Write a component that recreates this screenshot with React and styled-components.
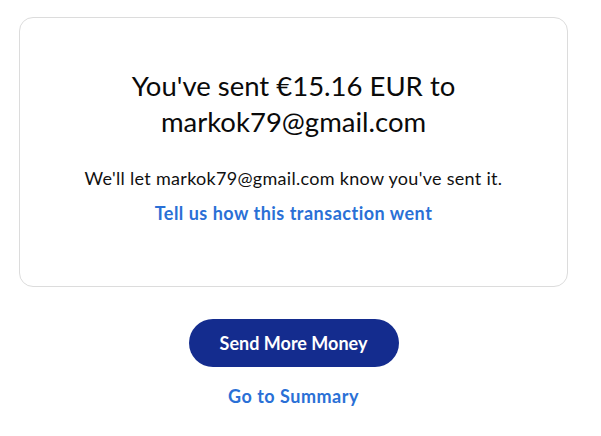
import styled, { createGlobalStyle } from 'styled-components';

const GlobalStyle = createGlobalStyle`
  body {
    margin: 0;
    background: #ffffff;
    font-family: 'Lato', 'Noto Sans', sans-serif;
    color: #001435;
  }
`;

const Page = styled.div`
  padding: 17px 33px 0 19px;
  display: flex;
  flex-direction: column;
  align-items: center;
`;

const Card = styled.section`
  box-sizing: border-box;
  width: 100%;
  height: 270px;
  border: 1px solid #dcdcdc;
  border-radius: 14px;
  padding: 50px 20px 0;
  display: flex;
  flex-direction: column;
  align-items: center;
  text-align: center;
`;

const Title = styled.h1`
  margin: 0;
  font-size: 27.5px;
  line-height: 36px;
  font-weight: 400;
  color: #0a0a0a;
  max-width: 340px;
`;

const Note = styled.p`
  margin: 26px 0 0;
  font-size: 18px;
  letter-spacing: 0.3px;
  line-height: 24px;
  color: #111;
`;

const Link = styled.a`
  display: inline-block;
  color: #2a70d6;
  font-weight: 700;
  font-size: 18px;
  letter-spacing: 0.5px;
  line-height: 24px;
  text-decoration: none;
  margin-top: ${(p) => p.top || 0}px;
  cursor: pointer;
`;

const Button = styled.button`
  margin-top: 32px;
  width: 210px;
  height: 48px;
  border: none;
  border-radius: 24px;
  background: #142c8e;
  color: #fff;
  font-family: inherit;
  font-weight: 700;
  font-size: 18px;
  cursor: pointer;
`;

export default function App() {
  return (
    <>
      <GlobalStyle />
      <Page>
        <Card>
          <Title>You've sent €15.16 EUR to markok79@gmail.com</Title>
          <Note>We'll let markok79@gmail.com know you've sent it.</Note>
          <Link top={11}>Tell us how this transaction went</Link>
        </Card>
        <Button>Send More Money</Button>
        <Link top={17}>Go to Summary</Link>
      </Page>
    </>
  );
}
